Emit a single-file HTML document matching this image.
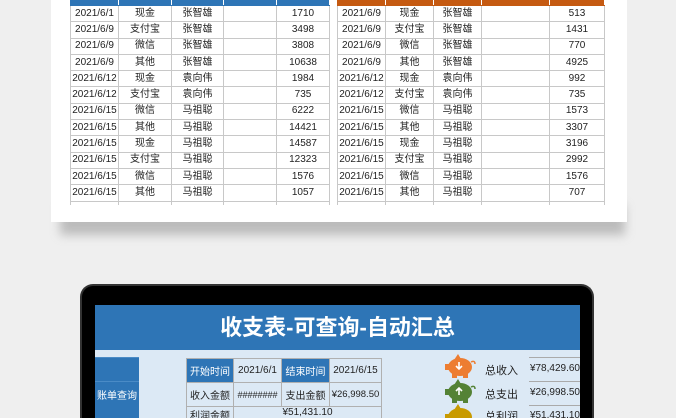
<!DOCTYPE html>
<html><head><meta charset="utf-8"><style>
*{margin:0;padding:0;box-sizing:border-box}
html,body{width:676px;height:418px;overflow:hidden}
body{background:#efefef;position:relative;font-family:"Liberation Sans","Noto Sans CJK SC",sans-serif;}
.shadow{position:absolute;left:60px;top:205px;width:565px;height:30px;background:#9a9a9a;filter:blur(5px);opacity:.6}
.card{position:absolute;left:51px;top:-5px;width:576px;height:227px;background:#fff}
table.d{position:absolute;border-collapse:collapse;font-size:10px;color:#222;table-layout:fixed}
table.d td{border:1px solid #c8c8c8;height:16.3px;text-align:center;padding:0;line-height:14px;white-space:nowrap;overflow:hidden}
table.d tr.h td{background:#2e75b6;height:5px;border-color:#2e75b6;border-right:1px solid #fff;line-height:0;font-size:0}
table.o tr.h td{background:#c55a11;border-color:#c55a11;border-right:1px solid #fff}
table.d tr.s td{height:4px;line-height:0;font-size:0;border-bottom:none}
.frame{position:absolute;left:80px;top:284px;width:514px;height:134px;background:#000;border-radius:13px 13px 0 0;border:2px solid #333;border-bottom:none}
.screen{position:absolute;left:95px;top:305px;width:485px;height:113px;background:#dce9f5}
.title{position:absolute;left:95px;top:305px;width:485px;height:45px;background:#2e75b6;color:#fff;font-size:22px;font-weight:bold;text-align:center;line-height:45px}
.lc{position:absolute;left:95px;top:357px;width:44px;height:61px;background:#2e75b6;color:#fff;font-size:10px;text-align:center;border-top:1px solid #4a8bc6}
table.q{position:absolute;left:186px;top:358px;border-collapse:collapse;font-size:10px;color:#222;table-layout:fixed;width:195px}
table.q td{border:1px solid #b0b0b0;height:24px;text-align:center;padding:0;white-space:nowrap;overflow:hidden}
td.b{background:#2e75b6;color:#fff}
.lab{position:absolute;left:485px;font-size:11px;color:#222}
.val{position:absolute;left:529px;width:51px;font-size:10px;color:#222;border-top:1px solid #aaa;height:13px;line-height:22px;text-align:right;white-space:nowrap;overflow:visible}
.v24{height:24px}
</style></head><body>
<div class="shadow"></div>
<div class="card"></div>
<table class="d" style="left:70px;top:0;width:259px">
<colgroup><col style="width:48px"><col style="width:53px"><col style="width:52px"><col style="width:53px"><col style="width:53px"></colgroup>
<tr class="h"><td></td><td></td><td></td><td></td><td></td></tr>
<tr><td>2021/6/1</td><td>现金</td><td>张智雄</td><td></td><td>1710</td></tr>
<tr><td>2021/6/9</td><td>支付宝</td><td>张智雄</td><td></td><td>3498</td></tr>
<tr><td>2021/6/9</td><td>微信</td><td>张智雄</td><td></td><td>3808</td></tr>
<tr><td>2021/6/9</td><td>其他</td><td>张智雄</td><td></td><td>10638</td></tr>
<tr><td>2021/6/12</td><td>现金</td><td>袁向伟</td><td></td><td>1984</td></tr>
<tr><td>2021/6/12</td><td>支付宝</td><td>袁向伟</td><td></td><td>735</td></tr>
<tr><td>2021/6/15</td><td>微信</td><td>马祖聪</td><td></td><td>6222</td></tr>
<tr><td>2021/6/15</td><td>其他</td><td>马祖聪</td><td></td><td>14421</td></tr>
<tr><td>2021/6/15</td><td>现金</td><td>马祖聪</td><td></td><td>14587</td></tr>
<tr><td>2021/6/15</td><td>支付宝</td><td>马祖聪</td><td></td><td>12323</td></tr>
<tr><td>2021/6/15</td><td>微信</td><td>马祖聪</td><td></td><td>1576</td></tr>
<tr><td>2021/6/15</td><td>其他</td><td>马祖聪</td><td></td><td>1057</td></tr>
<tr class="s"><td></td><td></td><td></td><td></td><td></td></tr>
</table>
<table class="d o" style="left:337px;top:0;width:267px">
<colgroup><col style="width:48px"><col style="width:48px"><col style="width:48px"><col style="width:68px"><col style="width:55px"></colgroup>
<tr class="h"><td></td><td></td><td></td><td></td><td></td></tr>
<tr><td>2021/6/9</td><td>现金</td><td>张智雄</td><td></td><td>513</td></tr>
<tr><td>2021/6/9</td><td>支付宝</td><td>张智雄</td><td></td><td>1431</td></tr>
<tr><td>2021/6/9</td><td>微信</td><td>张智雄</td><td></td><td>770</td></tr>
<tr><td>2021/6/9</td><td>其他</td><td>张智雄</td><td></td><td>4925</td></tr>
<tr><td>2021/6/12</td><td>现金</td><td>袁向伟</td><td></td><td>992</td></tr>
<tr><td>2021/6/12</td><td>支付宝</td><td>袁向伟</td><td></td><td>735</td></tr>
<tr><td>2021/6/15</td><td>微信</td><td>马祖聪</td><td></td><td>1573</td></tr>
<tr><td>2021/6/15</td><td>其他</td><td>马祖聪</td><td></td><td>3307</td></tr>
<tr><td>2021/6/15</td><td>现金</td><td>马祖聪</td><td></td><td>3196</td></tr>
<tr><td>2021/6/15</td><td>支付宝</td><td>马祖聪</td><td></td><td>2992</td></tr>
<tr><td>2021/6/15</td><td>微信</td><td>马祖聪</td><td></td><td>1576</td></tr>
<tr><td>2021/6/15</td><td>其他</td><td>马祖聪</td><td></td><td>707</td></tr>
<tr class="s"><td></td><td></td><td></td><td></td><td></td></tr>
</table>
<div class="frame"></div>
<div class="screen"></div>
<div class="title">收支表-可查询-自动汇总</div>
<div class="lc"><div style="border-bottom:1px solid #4a8bc6;height:24px"></div><div style="padding-top:5px">账单查询</div></div>
<table class="q">
<colgroup><col style="width:47px"><col style="width:48px"><col style="width:48px"><col style="width:52px"></colgroup>
<tr><td class="b">开始时间</td><td>2021/6/1</td><td class="b">结束时间</td><td>2021/6/15</td></tr>
<tr><td>收入金额</td><td style="font-size:9px">########</td><td>支出金额</td><td style="font-size:9.5px">¥26,998.50</td></tr>
<tr><td style="height:12px;vertical-align:top;overflow:hidden">利润金额</td><td colspan="3" style="height:12px;vertical-align:top">¥51,431.10</td></tr>
</table>
<svg style="position:absolute;left:444px;top:354px" width="32" height="64" viewBox="0 0 32 64">
<g fill="#ed7d31"><ellipse cx="16" cy="13" rx="12" ry="9"/><rect x="8" y="17" width="5" height="7"/><rect x="19" y="17" width="5" height="7"/><polygon points="10,6 14,0 17,5"/><rect x="1" y="10" width="5" height="6"/><path d="M27 8q4 -2 4 2" stroke="#ed7d31" fill="none" stroke-width="1.5"/></g>
<g fill="#548235" transform="translate(0,25)"><ellipse cx="16" cy="13" rx="12" ry="9"/><rect x="8" y="17" width="5" height="7"/><rect x="19" y="17" width="5" height="7"/><polygon points="10,6 14,0 17,5"/><rect x="1" y="10" width="5" height="6"/><path d="M27 8q4 -2 4 2" stroke="#548235" fill="none" stroke-width="1.5"/></g>
<g fill="#c89a00" transform="translate(0,50)"><ellipse cx="16" cy="13" rx="12" ry="9"/><polygon points="10,6 14,0 17,5"/><rect x="1" y="10" width="5" height="6"/></g>
<path d="M15 8v7M12 12l3 3 3-3" stroke="#fff" stroke-width="1.6" fill="none"/>
<path d="M15 41v-7M12 37l3-3 3 3" stroke="#fff" stroke-width="1.6" fill="none"/>
</svg>
<div class="lab" style="top:362px">总收入</div>
<div class="lab" style="top:386px">总支出</div>
<div class="lab" style="top:408px;height:10px;overflow:hidden">总利润</div>
<div class="val v24" style="top:357px">¥78,429.60</div>
<div class="val v24" style="top:381px">¥26,998.50</div>
<div class="val" style="top:405px;overflow:hidden;line-height:20px">¥51,431.10</div>
</body></html>
